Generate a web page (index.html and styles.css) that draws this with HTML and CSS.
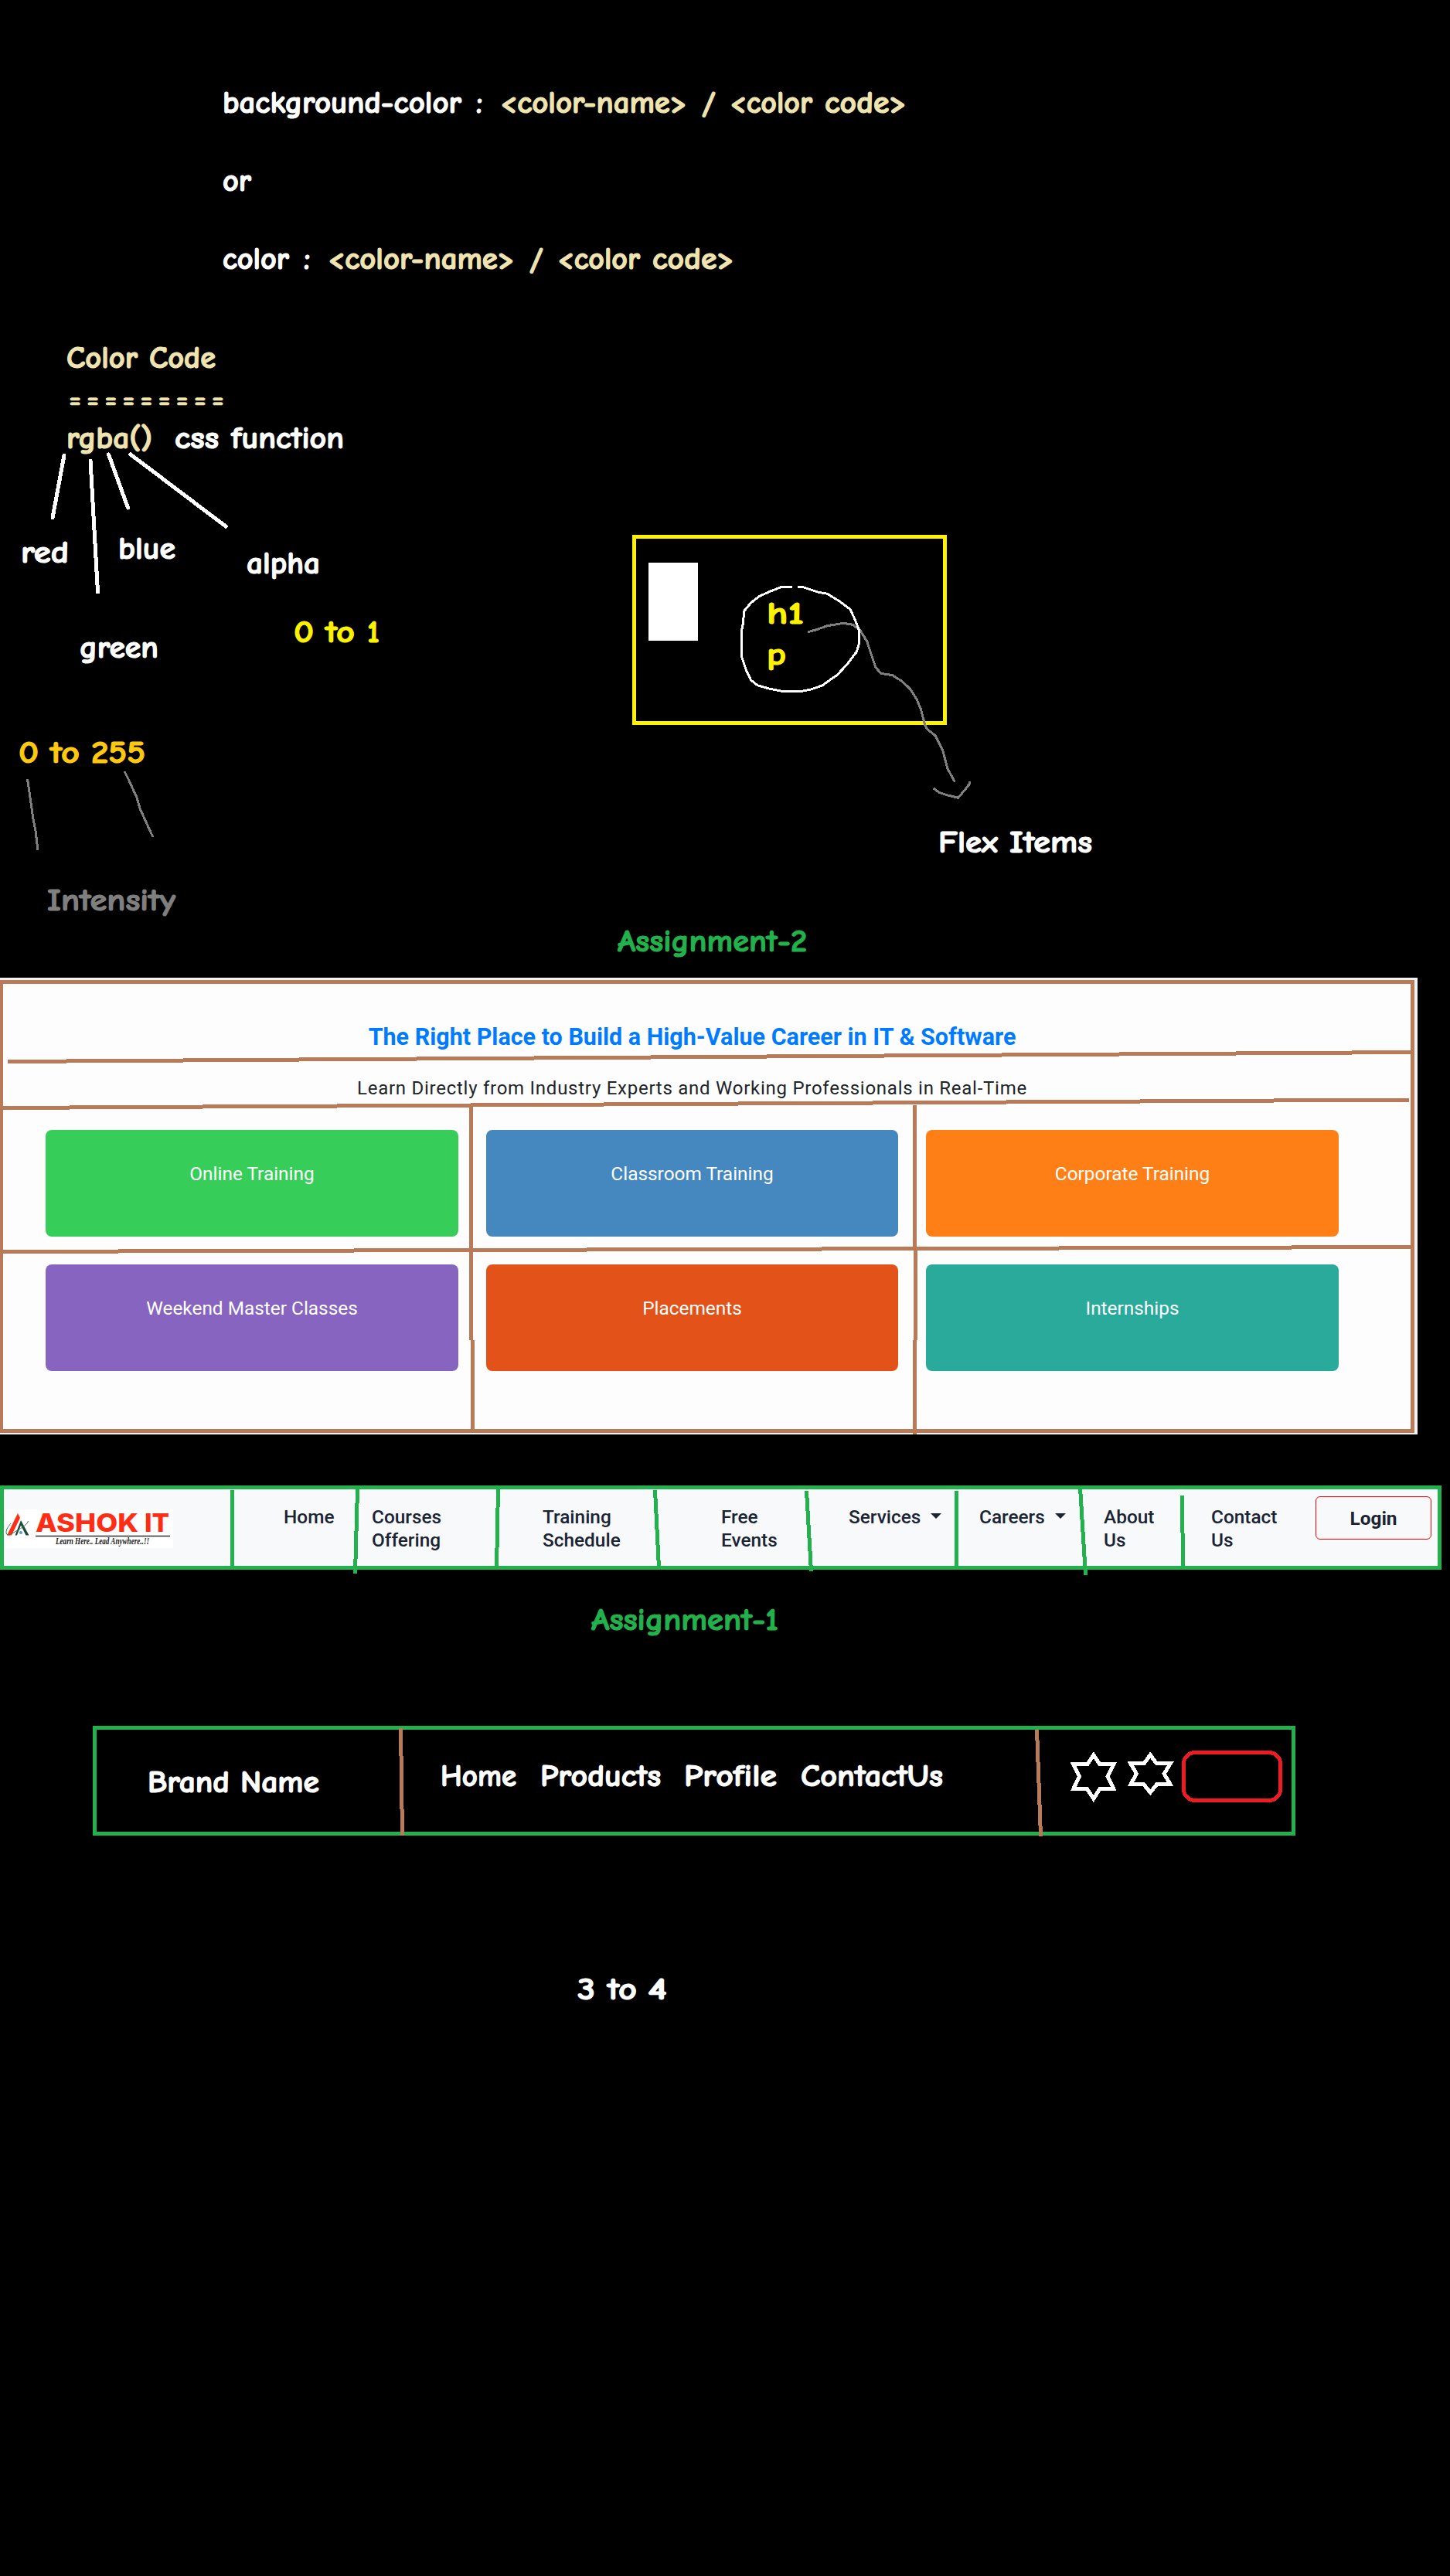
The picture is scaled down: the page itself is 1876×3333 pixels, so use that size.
FILE: index.html
```html
<!DOCTYPE html>
<html lang="en">
<head>
<meta charset="utf-8">
<title>CSS class notes</title>
<link rel="stylesheet" href="styles.css">
</head>
<body>
<main class="board">
  <section class="training">
    <div class="training-frame">
      <h2 class="training-title">The Right Place to Build a High-Value Career in IT &amp; Software</h2>
      <p class="training-lead">Learn Directly from Industry Experts and Working Professionals in Real-Time</p>
      <div class="cards">
        <div class="card card-green">Online Training</div>
        <div class="card card-blue">Classroom Training</div>
        <div class="card card-orange">Corporate Training</div>
        <div class="card card-purple">Weekend Master Classes</div>
        <div class="card card-red">Placements</div>
        <div class="card card-teal">Internships</div>
      </div>
    </div>
  </section>

  <nav class="navbar">
    <div class="logo">
      <svg width="219" height="50" viewBox="5 1953 219 50">
        <path d="M9 1986.500L23 1958L26 1964L15 1986.500Z" fill="#ff2d16"/>
        <path d="M19.500 1986.500L27 1967L37.500 1986.500H33.500L27 1973.500L22 1986.500Z" fill="#1c4a38"/>
        <path d="M14 1971Q6 1980 8.500 1985Q11 1988 19 1982Q36 1973 36.500 1968" fill="none" stroke="#3e7a5c" stroke-width="1"/>
        <circle cx="27" cy="1983" r="2" fill="#4f9ec0"/>
        <text class="logo-name" y="1982"><tspan x="46" textLength="133" lengthAdjust="spacingAndGlyphs">ASHOK</tspan><tspan x="187" textLength="32" lengthAdjust="spacingAndGlyphs">IT</tspan></text>
        <path d="M46 1987.500H220" stroke="#333" stroke-width="1.300"/>
        <text class="logo-motto" x="72" y="1998" textLength="121" lengthAdjust="spacingAndGlyphs">Learn Here.. Lead Anywhere..!!</text>
      </svg>
    </div>
    <a class="nav-link">Home</a>
    <a class="nav-link">Courses<br>Offering</a>
    <a class="nav-link">Training<br>Schedule</a>
    <a class="nav-link">Free<br>Events</a>
    <a class="nav-link">Services<span class="caret"></span></a>
    <a class="nav-link">Careers<span class="caret"></span></a>
    <a class="nav-link">About<br>Us</a>
    <a class="nav-link">Contact<br>Us</a>
    <button class="login">Login</button>
  </nav>

  <svg class="ink" width="1876" height="3333" viewBox="0 0 1876 3333">
    <!-- colour syntax -->
    <g class="hand">
      <text y="146"><tspan x="288" textLength="309" lengthAdjust="spacingAndGlyphs">background-color</tspan><tspan x="616">:</tspan></text>
      <text y="146" class="cream"><tspan x="647" textLength="242" lengthAdjust="spacingAndGlyphs">&lt;color-name&gt;</tspan><tspan x="908" textLength="18" lengthAdjust="spacingAndGlyphs">/</tspan><tspan x="944" textLength="107" lengthAdjust="spacingAndGlyphs">&lt;color</tspan><tspan x="1067" textLength="106" lengthAdjust="spacingAndGlyphs">code&gt;</tspan></text>
      <text y="247" x="288" textLength="37" lengthAdjust="spacingAndGlyphs">or</text>
      <text y="348"><tspan x="288" textLength="86" lengthAdjust="spacingAndGlyphs">color</tspan><tspan x="393">:</tspan></text>
      <text y="348" class="cream"><tspan x="424" textLength="242" lengthAdjust="spacingAndGlyphs">&lt;color-name&gt;</tspan><tspan x="685" textLength="18" lengthAdjust="spacingAndGlyphs">/</tspan><tspan x="721" textLength="107" lengthAdjust="spacingAndGlyphs">&lt;color</tspan><tspan x="844" textLength="106" lengthAdjust="spacingAndGlyphs">code&gt;</tspan></text>
    </g>

    <!-- rgba breakdown -->
    <g class="hand">
      <text y="476" class="cream"><tspan x="86" textLength="92" lengthAdjust="spacingAndGlyphs">Color</tspan><tspan x="193" textLength="86" lengthAdjust="spacingAndGlyphs">Code</tspan></text>
      <text y="528" x="89" class="cream rule" textLength="201" lengthAdjust="spacing">=========</text>
      <text y="580" class="cream" x="86" textLength="111" lengthAdjust="spacingAndGlyphs">rgba()</text>
      <text y="580"><tspan x="226" textLength="57" lengthAdjust="spacingAndGlyphs">css</tspan><tspan x="299" textLength="146" lengthAdjust="spacingAndGlyphs">function</tspan></text>
      <text y="728" x="27" textLength="62" lengthAdjust="spacingAndGlyphs">red</text>
      <text y="723" x="153" textLength="74" lengthAdjust="spacingAndGlyphs">blue</text>
      <text y="742" x="319" textLength="95" lengthAdjust="spacingAndGlyphs">alpha</text>
      <text y="851" x="103" textLength="102" lengthAdjust="spacingAndGlyphs">green</text>
      <text y="831" class="yellow"><tspan x="380" textLength="26" lengthAdjust="spacingAndGlyphs">0</tspan><tspan x="421" textLength="38" lengthAdjust="spacingAndGlyphs">to</tspan><tspan x="475">1</tspan></text>
      <text y="987" class="gold"><tspan x="24" textLength="26" lengthAdjust="spacingAndGlyphs">0</tspan><tspan x="65" textLength="38" lengthAdjust="spacingAndGlyphs">to</tspan><tspan x="118" textLength="70" lengthAdjust="spacingAndGlyphs">255</tspan></text>
      <text y="1178" class="grey" x="61" textLength="166" lengthAdjust="spacingAndGlyphs">Intensity</text>
    </g>
    <path class="stroke white" d="M83 589L68 670M117 596L126.500 766M140.500 588L165.500 657M169 588L292 681"/>
    <path class="stroke thin grey-line" d="M35.500 1008L38.500 1028L43 1060L46 1075L49 1100M161 998L167 1010L177 1032L181 1046L195 1077L198 1083"/>

    <!-- flex container sketch -->
    <rect class="stroke yellow-line" x="820.500" y="694.500" width="402" height="241"/>
    <rect x="839" y="728" width="64" height="101" fill="#fff"/>
    <g transform="translate(780 660) scale(.4209 .3333)">
      <path class="stroke thin grey-line" d="M630 473L655 465L690 449L740 439L768 445L790 465L812 510L825 560L838 610L855 634L890 641L920 665L945 695L965 735L978 775L990 835L997 850L1022 876L1044 930L1060 1005L1082 1055M1016 1080L1035 1097L1060 1107L1092 1117L1112 1087L1127 1063V1052"/>
      <path class="stroke thin white" d="M579 298H550L515 315L480 335L455 360L434 392L431 440L427 465V570L440 620L455 660L475 680L510 693L550 703H612L640 696L674 681L720 640L750 600L780 550L787 520V465L775 425L760 385L725 352L690 325L660 318L613 298H602"/>
    </g>
    <g class="hand">
      <text class="yellow" y="807" x="992" textLength="48" lengthAdjust="spacingAndGlyphs">h1</text>
      <text class="yellow" y="860" x="992" textLength="25" lengthAdjust="spacingAndGlyphs">p</text>
      <text y="1103"><tspan x="1214" textLength="77" lengthAdjust="spacingAndGlyphs">Flex</tspan><tspan x="1306" textLength="107" lengthAdjust="spacingAndGlyphs">Items</tspan></text>
      <text class="green" y="1230.500" x="799" textLength="245" lengthAdjust="spacingAndGlyphs">Assignment-2</text>
      <text class="green" y="2109" x="765" textLength="242" lengthAdjust="spacingAndGlyphs">Assignment-1</text>
    </g>

    <!-- row and column guides over the training panel -->
    <path class="stroke brown" d="M10 1373.500L1827 1361.500M4 1433.500L1823 1423M4 1619.500L1827 1613.500M609.500 1428V1734M611 1734V1852M1183.500 1430V1614M1184.500 1614V1734M1183.500 1734V1856"/>

    <!-- column guides over the navbar -->
    <path class="stroke green-line" d="M300.500 1928V2031M462.500 1927L459.500 2036M644.500 1925L642.500 2029M847.500 1928L852.500 2029M1043.500 1929L1049.500 2033M1237.500 1929V2031M1397.500 1925L1404.500 2038M1529.500 1935L1530.500 2029"/>

    <!-- brand bar wireframe -->
    <rect class="stroke green-line" x="122.500" y="2235.500" width="1551" height="137"/>
    <path class="stroke brown" d="M518.500 2236L520.500 2375M1341.500 2238L1346.500 2376"/>
    <g class="hand">
      <text y="2319"><tspan x="191" textLength="106" lengthAdjust="spacingAndGlyphs">Brand</tspan><tspan x="311" textLength="102" lengthAdjust="spacingAndGlyphs">Name</tspan></text>
      <text y="2311"><tspan x="570" textLength="98" lengthAdjust="spacingAndGlyphs">Home</tspan><tspan x="699" textLength="156" lengthAdjust="spacingAndGlyphs">Products</tspan><tspan x="885" textLength="120" lengthAdjust="spacingAndGlyphs">Profile</tspan><tspan x="1036" textLength="184" lengthAdjust="spacingAndGlyphs">ContactUs</tspan></text>
      <text y="2587"><tspan x="747" textLength="23" lengthAdjust="spacingAndGlyphs">3</tspan><tspan x="786" textLength="38" lengthAdjust="spacingAndGlyphs">to</tspan><tspan x="838" textLength="25" lengthAdjust="spacingAndGlyphs">4</tspan></text>
    </g>
    <g transform="translate(900 2200) scale(.5102 .3333)">
      <path class="stroke star" d="M1009 212L1025 249H1060L1045 296L1060 344H1025L1009 382L993 344H958L973 296L958 249H993Z"/>
      <path class="stroke star" d="M1153 212L1169 245H1204L1188 285L1204 327H1169L1153 358L1137 327H1103L1118 285L1103 245H1137Z"/>
    </g>
    <rect class="stroke red-line" x="1531.500" y="2267.500" width="125" height="62" rx="15" ry="14"/>
  </svg>
</main>
</body>
</html>
```
FILE: styles.css
```css
body {
  margin: 0;
  background: #000;
}

.board {
  position: relative;
  box-sizing: border-box;
  width: 1876px;
  height: 3333px;
  padding-top: 1265px;
  overflow: hidden;
  font-family: Roboto, "Liberation Sans", sans-serif;
}

/* Training panel */
.training {
  box-sizing: border-box;
  width: 1834px;
  height: 591px;
  padding: 3px 4px 2px 0;
  background: #f1f3f3;
}

.training-frame {
  box-sizing: border-box;
  height: 586px;
  padding: 51px 93px 0 55px;
  border: 5px solid #b97a57;
  border-left-width: 4px;
  background: #fdfdfd;
  text-align: center;
}

.training-title {
  margin: 0;
  font-size: 30.5px;
  line-height: 36px;
  font-weight: 700;
  color: #007bff;
  white-space: nowrap;
}

.training-lead {
  margin: 30px 0 36px;
  font-size: 24px;
  line-height: 36px;
  letter-spacing: 0.74px;
  color: #212529;
  white-space: nowrap;
}

.cards {
  display: grid;
  grid-template-columns: 534px 533px 534px;
  gap: 36px;
}

.card {
  box-sizing: border-box;
  height: 138px;
  padding-top: 39px;
  border-radius: 8px;
  font-size: 24.4px;
  line-height: 36px;
  color: #fff;
}

.card-green { background: #36cd58; }
.card-blue { background: #4588bf; }
.card-orange { background: #ff7f17; }
.card-purple { background: #8764c0; }
.card-red { background: #e35218; }
.card-teal { background: #29aa9a; }

/* Navbar */
.navbar {
  display: grid;
  grid-template-columns: 361px 114px 221px 231px 165px 169px 161px 139px 136px 150px;
  box-sizing: border-box;
  width: 1865px;
  height: 109px;
  margin-top: 66px;
  border: 5px solid #22b14c;
  background: #f7f9fb;
}

.logo {
  width: 219px;
  height: 50px;
  margin-top: 26px;
  background: #fff;
}

.logo svg {
  display: block;
  overflow: visible;
}

.logo-name {
  font: 800 33px Inter, sans-serif;
  fill: #ff2d16;
}

.logo-motto {
  font: italic 700 12px "Liberation Serif", serif;
  fill: #222;
}

.nav-link {
  padding: 21px 0 0 1px;
  font-size: 24.4px;
  line-height: 30px;
  font-weight: 500;
  color: #1b2433;
  white-space: nowrap;
}

.caret {
  display: inline-block;
  margin-left: 13px;
  border: 7px solid transparent;
  border-top-color: #1b2433;
  border-bottom: 0;
  vertical-align: 6px;
}

.login {
  box-sizing: border-box;
  width: 150px;
  height: 56px;
  margin-top: 9px;
  padding: 0;
  border: 1px solid #f00;
  border-radius: 6px;
  background: transparent;
  font: 700 24.4px Roboto, sans-serif;
  color: #1b2433;
}

/* Hand-drawn layer */
.ink {
  position: absolute;
  left: 0;
  top: 0;
}

.hand text {
  font-family: "Comic Sans MS", "Comic Neue", Inter, sans-serif;
  font-size: 40.5px;
  font-weight: 700;
  font-feature-settings: "cv11", "cv08", "calt" 0;
  fill: #fff;
  stroke: #fff;
  stroke-width: 1.2px;
  stroke-linejoin: round;
}

.hand .cream { fill: #efe4b0; stroke: #efe4b0; }
.hand .yellow { fill: #fff200; stroke: #fff200; }
.hand .gold { fill: #ffc90e; stroke: #ffc90e; }
.hand .grey { fill: #7f7f7f; stroke: #7f7f7f; }
.hand .green { fill: #22b14c; stroke: #22b14c; }
.hand .rule { font-size: 35px; stroke-width: 0.5px; }

.stroke {
  fill: none;
  stroke-width: 5px;
  vector-effect: non-scaling-stroke;
  shape-rendering: crispEdges;
}

.thin { stroke-width: 3px; }
.star { stroke: #fff; stroke-width: 5px; }
.white { stroke: #fff; stroke-linecap: round; }
.grey-line { stroke: #7f7f7f; }
.yellow-line { stroke: #fff200; }
.brown { stroke: #b97a57; }
.green-line { stroke: #22b14c; }
.red-line { stroke: #ed1c24; }
```
